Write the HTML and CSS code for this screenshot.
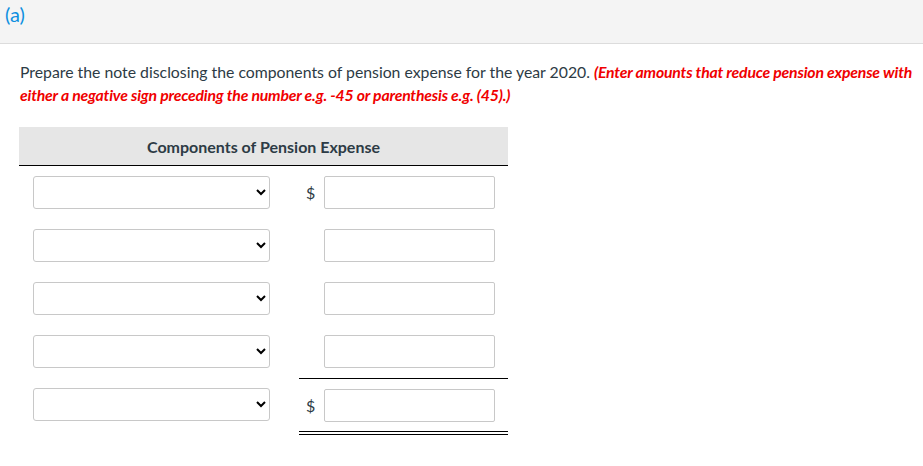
FILE: index.html
```html
<!DOCTYPE html>
<html>
<head>
<meta charset="utf-8">
<link rel="stylesheet" href="styles.css">
</head>
<body>
<div class="part-header">(a)</div>
<div class="content">
  <p class="prompt">Prepare the note disclosing the components of pension expense for the year 2020. <em class="hint">(Enter amounts that reduce pension expense with either a negative sign preceding the number e.g. -45 or parenthesis e.g. (45).)</em></p>
  <div class="sheet">
    <div class="sheet-head">Components of Pension Expense</div>
    <div class="row">
      <div class="label-cell"><select class="sel"><option></option></select></div>
      <div class="amount-cell"><span class="cur">$</span><input class="amt" type="text"></div>
    </div>
    <div class="row">
      <div class="label-cell"><select class="sel"><option></option></select></div>
      <div class="amount-cell"><span class="cur"></span><input class="amt" type="text"></div>
    </div>
    <div class="row">
      <div class="label-cell"><select class="sel"><option></option></select></div>
      <div class="amount-cell"><span class="cur"></span><input class="amt" type="text"></div>
    </div>
    <div class="row">
      <div class="label-cell"><select class="sel"><option></option></select></div>
      <div class="amount-cell"><span class="cur"></span><input class="amt" type="text"></div>
    </div>
    <div class="row total">
      <div class="label-cell"><select class="sel"><option></option></select></div>
      <div class="amount-cell"><span class="cur">$</span><input class="amt" type="text"></div>
    </div>
  </div>
</div>
</body>
</html>
```
FILE: styles.css
```css
html, body {
  margin: 0;
  padding: 0;
  background: #fff;
  font-family: Lato, "Liberation Sans", sans-serif;
  color: #2d3b45;
}
.part-header {
  background: #f4f4f4;
  border-bottom: 1px solid #dcdcdc;
  height: 44px;
  box-sizing: border-box;
  padding: 2px 0 0 5px;
  font-size: 20px;
  line-height: 24px;
  color: #0d8fe0;
}
.content {
  padding: 0 0 0 20px;
}
.prompt {
  margin: 16px 0 0 0;
  font-size: 15.8px;
  line-height: 23px;
  width: 897px;
}
.hint {
  color: #f00000;
  font-weight: bold;
  font-style: italic;
  letter-spacing: -0.2px;
}
.sheet {
  margin-top: 21px;
  width: 489px;
  margin-left: -1px;
}
.sheet-head {
  background: #e6e6e6;
  border-bottom: 1px solid #000;
  height: 39px;
  box-sizing: border-box;
  display: flex;
  align-items: center;
  justify-content: center;
  font-size: 16px;
  font-weight: bold;
  color: #2d3b45;
}
.row {
  display: flex;
}
.label-cell {
  width: 280px;
  box-sizing: border-box;
  padding: 10px 0 10px 14px;
}
.amount-cell {
  flex: 1;
  display: flex;
  align-items: center;
  padding: 10px 13px 10px 6px;
}
.total .amount-cell {
  border-top: 1px solid #000;
  border-bottom: 4px double #000;
  padding-bottom: 9px;
}
.sel {
  width: 237px;
  height: 33px;
  box-sizing: border-box;
  border: 1px solid #c8c8c8;
  border-radius: 3px;
  background: #fff;
  margin: 0;
  display: block;
}
.cur {
  width: 19px;
  font-size: 16px;
  color: #2d3b45;
  padding-left: 1px;
  box-sizing: border-box;
}
.amt {
  width: 171px;
  height: 33px;
  box-sizing: border-box;
  border: 1px solid #c8c8c8;
  border-radius: 2px;
  margin: 0;
  padding: 0;
  display: block;
}
```
